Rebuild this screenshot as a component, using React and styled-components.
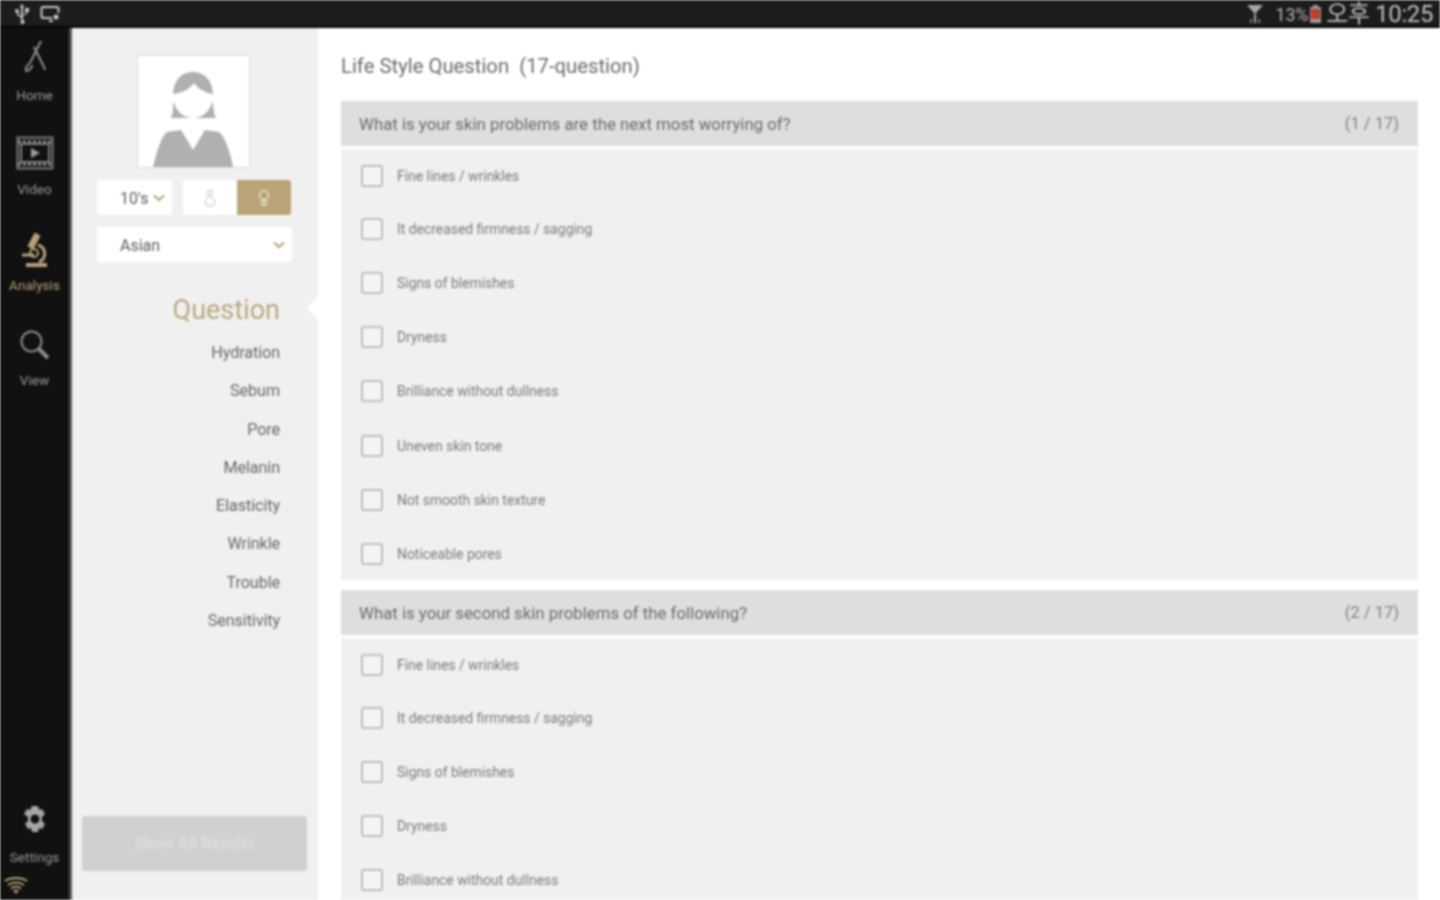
import React from 'react';
import styled, { createGlobalStyle } from 'styled-components';

const Global = createGlobalStyle`
  html, body { margin: 0; padding: 0; background: #fff; overflow: hidden; }
  * { box-sizing: border-box; }
`;
const Screen = styled.div`
  width: 1440px; height: 900px; overflow: hidden; display: flex; flex-direction: column;
  font-family: Roboto, "Noto Sans CJK KR", sans-serif; filter: blur(0.8px); background: #fff;
`;
const StatusBar = styled.header`
  height: 28px; flex: none; background: #1c1c1c; border-bottom: 2px solid #050505;
  display: flex; align-items: center; justify-content: space-between; padding: 2px 7px 0 14px; color: #b5b5b5;
`;
const StatusGroup = styled.div`display: flex; align-items: center; gap: ${p => p.$gap || 0}px;`;
const Percent = styled.span`font-size: 18px; letter-spacing: -0.2px; margin-left: 11px;`;
const Clock = styled.span`font-size: 24px; line-height: 26px; margin-left: 5px; letter-spacing: -0.4px; color: #c0c0c0;`;
const Body = styled.div`flex: 1; display: flex; min-height: 0;`;
const Rail = styled.nav`
  width: 72px; flex: none; background: #111; border-right: 3px solid #555; display: flex; flex-direction: column; color: #999;
`;
const RailItem = styled.div`
  height: 95px; flex: none; display: flex; flex-direction: column; align-items: center; padding-top: ${p => p.$top || 10}px;
  color: ${p => p.$active ? '#b5a078' : 'inherit'};
`;
const IconBox = styled.div`height: 42px; display: flex; align-items: center; justify-content: center;`;
const RailLabel = styled.span`font-size: 13.6px; line-height: 16px; margin-top: ${p => p.$mt || 6}px;`;
const RailBottom = styled.div`
  margin-top: auto; display: flex; flex-direction: column; align-items: center; padding-bottom: 5px;
`;
const Wifi = styled.div`align-self: flex-start; margin: 11px 0 0 4px; height: 19px;`;
const Panel = styled.aside`
  width: 246px; flex: none; background: #f0f0f0; display: flex; flex-direction: column; align-items: flex-start; padding: 27px 0 29px 25px; position: relative;
`;
const Avatar = styled.div`
  width: 113px; height: 113px; background: #fff; border: 1px solid #dcdcdc; margin-left: 40px; margin-bottom: 1px; overflow: hidden;
`;
const ControlRow = styled.div`display: flex; margin-top: 11px; gap: 11px;`;
const SelectBox = styled.div`
  width: ${p => p.$w}px; height: 35px; background: #fff; border-radius: 3px; display: flex; align-items: center; justify-content: space-between;
  padding: 1px 7px 0 23px; font-size: 16px; color: #5c5c5c;
`;
const Toggle = styled.div`display: flex; height: 35px; width: 108px; border-radius: 3px; overflow: hidden; background: #fff;`;
const ToggleCell = styled.div`
  flex: 1; display: flex; align-items: center; justify-content: center; background: ${p => p.$on ? '#b9a477' : '#fff'}; color: ${p => p.$on ? '#e8dcc2' : '#d6d6d6'};
`;
const RaceRow = styled.div`margin-top: 12px;`;
const Menu = styled.ul`
  list-style: none; margin: 30px 0 0; padding: 0 25px 0 0; width: 208px; text-align: right; color: #666;
`;
const MenuTitle = styled.li`font-size: 27px; line-height: 36px; color: #bba97f; margin-bottom: 6px;`;
const MenuItem = styled.li`font-size: 16.2px; line-height: 38.3px; letter-spacing: -0.1px;`;
const Notch = styled.div`
  position: absolute; right: 0; top: 268px; width: 0; height: 0;
  border-top: 12px solid transparent; border-bottom: 12px solid transparent; border-right: 11px solid #fff;
`;
const ResultButton = styled.button`
  margin-top: auto; margin-left: -15px; width: 225px; height: 55px; border: none; border-radius: 3px; background: #d0d0d0; color: #dcdcdc;
  font: 700 16px Roboto, sans-serif;
`;
const Main = styled.main`flex: 1; padding: 0 22px 0 23px; min-width: 0;`;
const Title = styled.h1`
  margin: 0; height: 73px; display: flex; align-items: center; font-weight: 400; font-size: 20.3px; color: #6b6b6b; white-space: pre; padding-top: 2px;
`;
const Section = styled.section`margin-bottom: 10px;`;
const QHeader = styled.div`
  height: 45px; background: #dedede; display: flex; align-items: center; justify-content: space-between; padding: 0 19px 0 18px;
  font-size: 16.8px; color: #6a6a6a;
`;
const Count = styled.span`color: #808080; font-size: 16.5px;`;
const Options = styled.div`
  background: #f0f0f0; margin-top: 3px; height: ${p => p.$h}px;
`;
const Option = styled.label`
  height: 54.1px; display: flex; align-items: center; padding-left: 20px; gap: 14px; font-size: 13.9px; color: #7a7a7a;
  &:first-child { height: 53.1px; }
`;
const Check = styled.span`
  width: 22px; height: 22px; border: 2px solid #bdbdbd; border-radius: 3px; background: #f4f4f4; flex: none;
`;

const Chevron = ({ c = '#b9a477' }) => (
  <svg width="12" height="8" viewBox="0 0 12 8"><path d="M1 1.500l5 4.500 5-4.500" fill="none" stroke={c} strokeWidth="2.200" /></svg>
);
const options = ['Fine lines / wrinkles', 'It decreased firmness / sagging', 'Signs of blemishes', 'Dryness', 'Brilliance without dullness', 'Uneven skin tone', 'Not smooth skin texture', 'Noticeable pores'];
const menu = ['Hydration', 'Sebum', 'Pore', 'Melanin', 'Elasticity', 'Wrinkle', 'Trouble', 'Sensitivity'];

const Question = ({ text, count, list, h }) => (
  <Section>
    <QHeader><span>{text}</span><Count>{count}</Count></QHeader>
    <Options $h={h}>
      {list.map(o => <Option key={o}><Check /><span>{o}</span></Option>)}
    </Options>
  </Section>
);

export default function App() {
  return (
    <Screen>
      <Global />
      <StatusBar>
        <StatusGroup $gap={10}>
          <svg width="16" height="20" viewBox="0 0 16 20" fill="#c8c8c8"><path d="M8 0l2.400 3H9v11.500c0 1 .1 1.500 1.200 2.300a2 2 0 1 1-3.300 0C7.900 16 7.900 15.500 7 14.500V3H5.600z" /><circle cx="3" cy="7" r="2" /><rect x="11" y="4" width="4" height="4" /><path d="M3 8h1.500v2L8 13v1.500L3 11zM13 8h-1.500v2L8 11v1.500L13 10z" /></svg>
          <svg width="20" height="18" viewBox="0 0 20 18" fill="none" stroke="#c8c8c8" strokeWidth="2"><path d="M12 13H3a1.500 1.500 0 0 1-1.500-1.500v-8A1.500 1.500 0 0 1 3 2h14a1.500 1.500 0 0 1 1.500 1.500V8" /><path d="M9 16h4" /><circle cx="16" cy="12" r="2.500" fill="#c8c8c8" stroke="none" /></svg>
        </StatusGroup>
        <StatusGroup>
          <svg width="18" height="20" viewBox="0 0 18 20" fill="#a8a8a8"><path d="M1 1h16l-8 9zM8 10h2v9H8z" /><path d="M4 15h2v4H4zM12 15h2v4h-2z" fill="#777" /></svg>
          <Percent>13%</Percent>
          <svg width="11" height="18" viewBox="0 0 11 18" style={{ marginLeft: 2 }}><rect x="3" y="0" width="5" height="2" fill="#999" /><rect x="0" y="2" width="11" height="16" fill="#999" /><rect x="1" y="4" width="9" height="10" fill="#b8402c" /></svg>
          <Clock>오후 10:25</Clock>
        </StatusGroup>
      </StatusBar>
      <Body>
        <Rail>
          <RailItem $top={8}>
            <IconBox>
              <svg width="28" height="36" viewBox="0 0 28 36" fill="none" stroke="#8f8f8f" strokeWidth="2"><path d="M20 2L9 24M13 8l10 20" /><path d="M9 24c-3 2-5 6-4 8 3 0 6-3 6-6M23 28l1 3" /></svg>
            </IconBox>
            <RailLabel $mt={9}>Home</RailLabel>
          </RailItem>
          <RailItem $top={9}>
            <IconBox>
              <svg width="38" height="34" viewBox="0 0 38 34" fill="none" stroke="#7d7d7d" strokeWidth="2"><rect x="1.500" y="1.500" width="35" height="31" /><path d="M2 6h34M2 28h34" strokeDasharray="3 2" strokeWidth="4" /><rect x="5" y="8" width="28" height="18" /><path d="M15 12l9 5-9 5z" fill="#9a9a9a" stroke="none" /></svg>
            </IconBox>
            <RailLabel $mt={7}>Video</RailLabel>
          </RailItem>
          <RailItem $active $top={12}>
            <IconBox>
              <svg width="32" height="40" viewBox="0 0 32 40" fill="none" stroke="#b5a078" strokeWidth="3"><path d="M16 2l5 3-7 13-5-3z" fill="#b5a078" strokeWidth="1" /><path d="M19 14a9 9 0 0 1 1 17" /><circle cx="15" cy="22" r="4" strokeWidth="2" /><path d="M3 24h12" /><path d="M7 34h21" strokeWidth="4" /></svg>
            </IconBox>
            <RailLabel $mt={5}>Analysis</RailLabel>
          </RailItem>
          <RailItem $top={11}>
            <IconBox>
              <svg width="32" height="32" viewBox="0 0 32 32" fill="none" stroke="#8a8a8a" strokeWidth="2"><circle cx="12.500" cy="12.500" r="10" /><path d="M20 20l9 9" strokeWidth="4" /></svg>
            </IconBox>
            <RailLabel $mt={6}>View</RailLabel>
          </RailItem>
          <RailBottom>
            <IconBox>
              <svg width="28" height="28" viewBox="0 0 28 28"><path fillRule="evenodd" fill="#a6a6a6" d="M11 1h6l1 4 3-1 3 5-3 3v4l3 3-3 5-3-1-1 4h-6l-1-4-3 1-3-5 3-3v-4L3 9l3-5 3 1z M14 9.500a4.500 4.500 0 1 0 .01 0z" /></svg>
            </IconBox>
            <RailLabel $mt={9}>Settings</RailLabel>
            <Wifi>
              <svg width="24" height="19" viewBox="0 0 24 19" fill="none" stroke="#b5a078" strokeWidth="2"><path d="M1 5c6-4 16-4 22 0M4 9c5-3 11-3 16 0M7 12.500c3-2 7-2 10 0" /><path d="M12 18l-3-4h6z" fill="#b5a078" stroke="none" /></svg>
            </Wifi>
          </RailBottom>
        </Rail>
        <Panel>
          <Avatar>
            <svg width="111" height="111" viewBox="0 0 111 111">
              <path d="M33 62c3-6 2-12 2-22C35 24 44 16 55 16s20 8 20 24c0 10 0 16 3 22z" fill="#b0b0b0" />
              <path d="M35 38c9-1 17-5 21-11 3 5 10 9 18 11 3 2 3 7 0 9-3 9-10 15-19 15s-16-6-19-15c-3-2-3-7-1-9z" fill="#fff" />
              <path d="M15 111c4-16 8-30 14-35l14-2 12 20 12-20 14 2c6 5 11 19 14 35z" fill="#b0b0b0" />
            </svg>
          </Avatar>
          <ControlRow>
            <SelectBox $w={75}><span>10's</span><Chevron /></SelectBox>
            <Toggle>
              <ToggleCell>
                <svg width="12" height="18" viewBox="0 0 12 18" fill="none" stroke="currentColor" strokeWidth="1.500"><circle cx="6" cy="4" r="2.500" /><path d="M6 7c3 2 5 4 5 6a5 4 0 0 1-10 0c0-2 2-4 5-6z" /></svg>
              </ToggleCell>
              <ToggleCell $on>
                <svg width="12" height="18" viewBox="0 0 12 18" fill="none" stroke="currentColor" strokeWidth="1.500"><circle cx="6" cy="6" r="4.500" /><path d="M4 12h4v4H4z" /></svg>
              </ToggleCell>
            </Toggle>
          </ControlRow>
          <RaceRow><SelectBox $w={195}><span>Asian</span><Chevron /></SelectBox></RaceRow>
          <Menu>
            <MenuTitle>Question</MenuTitle>
            {menu.map(m => <MenuItem key={m}>{m}</MenuItem>)}
          </Menu>
          <Notch />
          <ResultButton>Show All Results</ResultButton>
        </Panel>
        <Main>
          <Title>{'Life Style Question  (17-question)'}</Title>
          <Question text="What is your skin problems are the next most worrying of?" count="(1 / 17)" list={options} h={431} />
          <Question text="What is your second skin problems of the following?" count="(2 / 17)" list={options.slice(0, 5)} h={300} />
        </Main>
      </Body>
    </Screen>
  );
}
